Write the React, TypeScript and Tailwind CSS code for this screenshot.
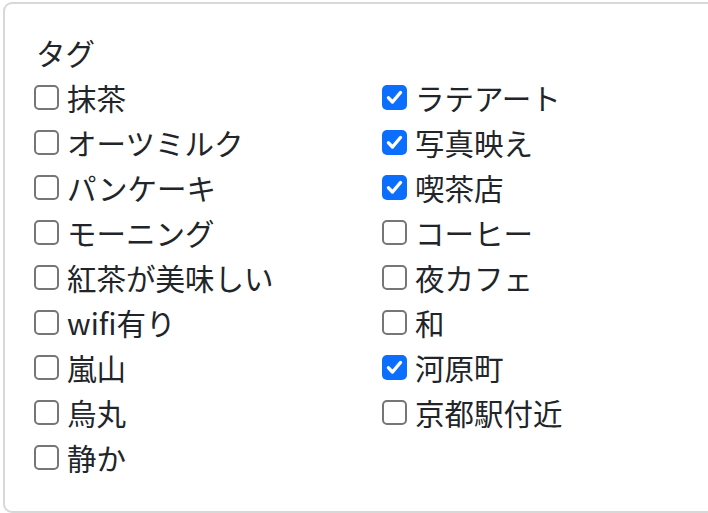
import React from 'react';

const left = [
  { label: '抹茶', checked: false },
  { label: 'オーツミルク', checked: false },
  { label: 'パンケーキ', checked: false },
  { label: 'モーニング', checked: false },
  { label: '紅茶が美味しい', checked: false },
  { label: 'wifi有り', checked: false },
  { label: '嵐山', checked: false },
  { label: '烏丸', checked: false },
  { label: '静か', checked: false },
];

const right = [
  { label: 'ラテアート', checked: true },
  { label: '写真映え', checked: true },
  { label: '喫茶店', checked: true },
  { label: 'コーヒー', checked: false },
  { label: '夜カフェ', checked: false },
  { label: '和', checked: false },
  { label: '河原町', checked: true },
  { label: '京都駅付近', checked: false },
];

const Box = ({ checked }: { checked: boolean }) =>
  checked ? (
    <span className="w-[25px] h-[25px] rounded-[5px] bg-[#0b6efd] flex items-center justify-center shrink-0">
      <svg width="25" height="25" viewBox="0 0 25 25" fill="none">
        <path d="M6.5 12.8l4 4.2 8-9.5" stroke="#fff" strokeWidth="3.4" strokeLinecap="round" strokeLinejoin="round" />
      </svg>
    </span>
  ) : (
    <span className="w-[25px] h-[25px] rounded-[5px] border-2 border-[#767676] bg-white shrink-0" />
  );

const Item = ({ label, checked }: { label: string; checked: boolean }) => (
  <label className="flex items-center gap-[8px] h-[45px]">
    <Box checked={checked} />
    <span className="-mt-[1px]">{label}</span>
  </label>
);

export default function App() {
  return (
    <div className="w-[708px] h-[513px] overflow-hidden bg-white pt-[2px] pl-[3px]">
      <div
        className="w-[780px] rounded-[9px] border-2 border-[#d8d8d8] pt-[26px] pb-[31px] pl-[29px] text-[29.5px] text-[#212529]"
        style={{ fontFamily: '"Noto Sans CJK JP", "Noto Sans", sans-serif' }}
      >
        <div className="h-[45px] leading-[45px] pl-[2px]">タグ</div>
        <div className="grid grid-cols-[348px_348px]">
          <div className="flex flex-col">
            {left.map((t) => (
              <Item key={t.label} {...t} />
            ))}
          </div>
          <div className="flex flex-col">
            {right.map((t) => (
              <Item key={t.label} {...t} />
            ))}
          </div>
        </div>
      </div>
    </div>
  );
}
